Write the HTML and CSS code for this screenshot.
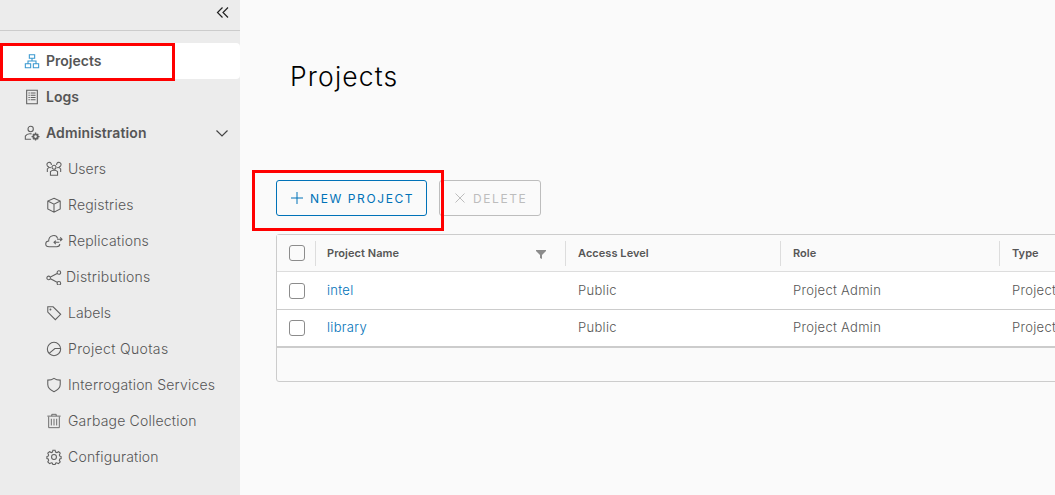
FILE: index.html
```html
<!DOCTYPE html>
<html lang="en">
<head>
<meta charset="utf-8">
<title>Projects</title>
<link rel="stylesheet" href="styles.css">
</head>
<body>
<div class="app">
  <aside class="sidebar">
    <div class="collapse"><svg class="chevrons" viewBox="0 0 14 14"><path d="M6.5 1.5 1.5 6.5l5 5M12 1.5 7 6.5l5 5"/></svg></div>
    <nav class="nav">
      <a class="item top active"><svg class="icon" viewBox="0 0 36 36"><path d="M12 4h12v8H12zM3 24h12v9H3zM21 24h12v9H21zM18 12v6M9 24v-6h18v6"/></svg><span class="t-projects">Projects</span></a>
      <a class="item top"><svg class="icon" viewBox="0 0 36 36"><path d="M6 3h24v30H6zM10 9h3M10 14h3M10 19h3M10 24h3M15 9h11M15 14h11M15 19h11M15 24h11"/></svg><span class="t-logs">Logs</span></a>
      <a class="item top"><svg class="icon" viewBox="0 0 36 36"><circle cx="15" cy="9" r="6"/><path d="M16 32H3v-7c3-5 9-6 14-5"/><circle cx="26" cy="26" r="5" class="hub"/><path d="M26 17v4M26 31v4M17 26h4M31 26h4M20 20l3 3M29 29l3 3M32 20l-3 3M23 29l-3 3" class="teeth"/></svg><span class="t-admin">Administration</span><svg class="caret" viewBox="0 0 14 14"><path d="m1.5 4.5 5.5 5.5 5.5-5.5"/></svg></a>
      <a class="item"><svg class="icon" viewBox="0 0 36 36"><circle cx="18" cy="14" r="4.5"/><path d="M10 32v-8c3-4 13-4 16 0v8zM12 9A5 5 0 1 0 7 13M24 9a5 5 0 1 1 5 4M3 25v-7c2-3 4-4 8-3M33 25v-7c-2-3-4-4-8-3"/></svg><span class="t-users">Users</span></a>
      <a class="item"><svg class="icon" viewBox="0 0 36 36"><path d="m18 3 14 6v18l-14 7-14-7V9zM4 9l14 7 14-7M18 16v18"/></svg><span class="t-registries">Registries</span></a>
      <a class="item"><svg class="icon cloud" viewBox="0 0 40 36"><path d="M33 25c0 4-3 6-7 6H9c-10 0-10-12-1-13C8 4 25 2 28 12M20 21h12M24 17l-4 4 4 4M27 14h11M34 10l4 4-4 4"/></svg><span class="t-replications">Replications</span></a>
      <a class="item dist"><svg class="icon" viewBox="0 0 36 36"><circle cx="6" cy="20" r="4"/><circle cx="29" cy="8" r="4"/><circle cx="29" cy="32" r="4"/><path d="m10 18 15-8M10 22l15 8"/></svg><span class="t-distributions">Distributions</span></a>
      <a class="item"><svg class="icon" viewBox="0 0 36 36"><path d="M4 4h12l17 17-12 12L4 16z"/><circle cx="10" cy="10" r="1"/></svg><span class="t-labels">Labels</span></a>
      <a class="item"><svg class="icon" viewBox="0 0 36 36"><circle cx="18" cy="18" r="15"/><path d="M33 17H20L7 28"/></svg><span class="t-quotas">Project Quotas</span></a>
      <a class="item"><svg class="icon" viewBox="0 0 36 36"><path d="M18 3c4 3 8 4 14 4v10c0 8-5 12-14 16C9 29 4 25 4 17V7c6 0 10-1 14-4z"/></svg><span class="t-interrogation">Interrogation Services</span></a>
      <a class="item"><svg class="icon bin" viewBox="0 0 36 36"><path d="M3 7h30M13 7V3h10v4M6 8v25h24V8M12 13v15M18 13v15M24 13v15"/></svg><span class="t-garbage">Garbage Collection</span></a>
      <a class="item"><svg class="icon" viewBox="0 0 36 36"><circle cx="18" cy="18" r="5.5"/><path d="m15.500 3h5l1 4 3 1 4-2 3.500 3.500-2 4 1 2.500 3 1v4.500l-3 1-1 3 2 3.500-4 4-4-2-2.500 1-1 3h-5l-1-3-2.500-1-4 2-4-4 2-3.500-1-3-3-1v-4.500l3-1 1-2.500-2-4L8 6l4 2 2.500-1z"/></svg><span class="t-configuration">Configuration</span></a>
    </nav>
  </aside>
  <main class="content">
    <h1 class="title">Projects</h1>
    <div class="actions">
      <button class="btn primary"><svg class="plus" viewBox="0 0 14 14"><path d="M7 1v12M1 7h12"/></svg><span>NEW PROJECT</span></button>
      <button class="btn disabled"><svg class="cross" viewBox="0 0 14 14"><path d="m2.500 2.500 9 9M11.500 2.500l-9 9"/></svg><span>DELETE</span></button>
    </div>
    <div class="grid">
      <div class="row head">
        <div class="cell check"><i class="box"></i></div>
        <div class="cell"><span>Project Name</span><svg class="funnel" viewBox="0 0 10 9"><path d="M0 0h10v1L6 5v4L4 8V5L0 1z"/></svg></div>
        <div class="cell"><span>Access Level</span></div>
        <div class="cell"><span>Role</span></div>
        <div class="cell"><span>Type</span></div>
      </div>
      <div class="row">
        <div class="cell check"><i class="box"></i></div>
        <div class="cell link"><span>intel</span></div>
        <div class="cell"><span>Public</span></div>
        <div class="cell"><span>Project Admin</span></div>
        <div class="cell"><span>Project</span></div>
      </div>
      <div class="row">
        <div class="cell check"><i class="box"></i></div>
        <div class="cell link"><span>library</span></div>
        <div class="cell"><span>Public</span></div>
        <div class="cell"><span>Project Admin</span></div>
        <div class="cell"><span>Project</span></div>
      </div>
      <div class="foot"></div>
    </div>
  </main>
  <div class="mark mark-nav"></div>
  <div class="mark mark-new"></div>
</div>
</body>
</html>
```
FILE: styles.css
```css
* { box-sizing: border-box; }
body { margin: 0; overflow: hidden; background: #fafafa; color: #565656; font-family: Inter, "Open Sans", sans-serif; }
.app { position: relative; display: flex; width: 1055px; height: 495px; overflow: hidden; }
.sidebar { flex: none; width: 240px; background: #ececec; }
.collapse { display: flex; justify-content: flex-end; height: 31px; padding: 6px 10px 0 0; border-bottom: 1px solid #ccc; }
.icon { flex: none; width: 16px; height: 16px; margin: 0 -1px; fill: none; stroke: #606060; stroke-width: 2.4; }
.chevrons, .caret { flex: none; width: 14px; height: 14px; fill: none; stroke: #444; stroke-width: 1.2; }
.chevrons { stroke: #222; }
.nav { padding-top: 12px; }
.item { display: flex; align-items: center; height: 36px; padding-left: 47px; gap: 7px; font-size: 14px; font-weight: 300; white-space: nowrap; letter-spacing: .2px; }
.item span { padding-bottom: 2px; }
.top { padding: 0 11px 0 25px; font-weight: 600; letter-spacing: .12px; }
.top .t-projects, .top .t-logs { letter-spacing: 0; }
.active { background: #fff; border-radius: 0 4px 4px 0; }
.active .icon { stroke: #3998cf; }
.caret { margin-left: auto; }
.cloud { width: 18px; margin: 0 -2px; }
.bin { stroke-width: 2; }
.dist { gap: 5px; }
.t-users { letter-spacing: 0; }
.t-labels { letter-spacing: .08px; }
.t-distributions { letter-spacing: .27px; }
.t-quotas { letter-spacing: .35px; }
.hub { stroke-width: 4; }
.teeth { stroke-width: 3; }
.content { flex: none; width: 860px; padding: 60px 0 0 36px; }
.title { height: 32px; margin: 0 0 88px 14px; color: #000; font-size: 26.5px; font-weight: 300; line-height: 32px; letter-spacing: 1.15px; }
.actions { display: flex; gap: 12px; }
.btn { display: flex; align-items: center; height: 36px; padding: 0 0 0 13px; border: 1px solid; border-radius: 3px; background: transparent; font: 400 12px Inter, sans-serif; letter-spacing: 1.6px; gap: 6px; white-space: nowrap; }
.btn svg { flex: none; width: 14px; height: 14px; fill: none; stroke: currentColor; stroke-width: 1; }
.primary { width: 151px; color: #0072b8; }
.disabled { width: 102px; color: #bdbdbd; }
.grid { width: 850px; height: 148px; margin-top: 18px; border: 1px solid #ccc; border-radius: 3px; font-size: 13px; font-weight: 300; letter-spacing: .3px; }
.row { display: grid; grid-template-columns: 38px 250px 215px 219px 126px; align-items: center; height: 37px; border-bottom: 1px solid #ccc; background: #fff; }
.row:nth-child(2) { height: 38px; }
.head { background: #fafafa; border-color: #ddd; font-size: 11px; font-weight: 600; letter-spacing: .05px; }
.cell { display: flex; align-items: center; height: 25px; padding-left: 12px; }
.cell:nth-child(n+3) span { padding-left: 1px; }
.row:not(.head) span { padding-bottom: 2px; }
.head .cell + .cell { border-left: 1px solid #ddd; padding-left: 11px; }
.box { width: 16px; height: 16px; border: 1px solid #8c8c8c; border-radius: 3px; }
.link { color: #0072b8; }
.funnel { width: 10px; height: 9px; margin: 3px 19px 0 auto; fill: #8c8c8c; }
.foot { height: 34px; border-top: 1px solid #ccc; }
.mark { position: absolute; border: 3px solid #f00; }
.mark-nav { left: 0; top: 43px; width: 175px; height: 38px; }
.mark-new { left: 252px; top: 170px; width: 192px; height: 61px; }
```
